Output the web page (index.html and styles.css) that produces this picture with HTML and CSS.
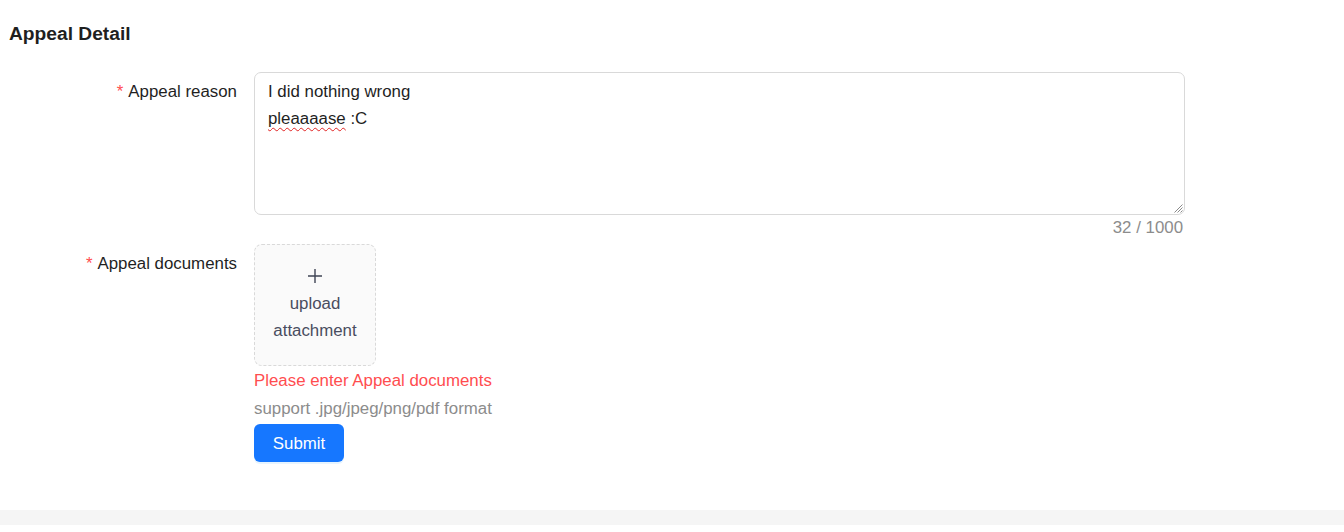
FILE: index.html
```html
<!DOCTYPE html>
<html lang="en">
<head>
<meta charset="utf-8">
<title>Appeal Detail</title>
<link rel="stylesheet" href="styles.css">
</head>
<body>
<div class="page">
  <h2 class="title">Appeal Detail</h2>
  <form class="form">
    <div class="row row-reason">
      <label class="label"><span class="req">*</span>Appeal reason</label>
      <div class="control">
        <div class="textarea" role="textbox" aria-multiline="true">
          <div class="line">I did nothing wrong</div>
          <div class="line"><span class="misspelled">pleaaaase</span> :C</div>
          <svg class="grip" width="10" height="10" viewBox="0 0 10 10"><path d="M9.5 1.5 L1.5 9.5 M9.5 4.5 L4.5 9.5 M9.5 7.5 L7.5 9.5" stroke="#8a8a8a" stroke-width="1"/></svg>
        </div>
        <div class="counter">32 / 1000</div>
      </div>
    </div>
    <div class="row row-docs">
      <label class="label"><span class="req">*</span>Appeal documents</label>
      <div class="control">
        <div class="upload">
          <svg class="plus" width="16" height="16" viewBox="0 0 16 16"><path d="M8 1 V15 M1 8 H15" stroke="#3f4454" stroke-width="1.4"/></svg>
          <div class="upload-text">upload</div>
          <div class="upload-text">attachment</div>
        </div>
        <div class="error">Please enter Appeal documents</div>
        <div class="hint">support .jpg/jpeg/png/pdf format</div>
        <button type="button" class="btn">Submit</button>
      </div>
    </div>
  </form>
  <div class="footer-strip"></div>
</div>
</body>
</html>
```
FILE: styles.css
```css
html, body {
  margin: 0;
  padding: 0;
  background: #ffffff;
}
body {
  font-family: "Liberation Sans", Arial, sans-serif;
  font-size: 16.85px;
  color: #1f1f1f;
}
.page {
  padding-top: 22px;
}
.title {
  margin: 0 0 26px 9px;
  font-size: 19.2px;
  line-height: 24px;
  font-weight: bold;
  color: #1f1f1f;
}
.form {
  display: flex;
  flex-direction: column;
}
.row {
  display: flex;
  align-items: flex-start;
}
.label {
  width: 237px;
  flex: none;
  padding-top: 6px;
  padding-right: 17px;
  text-align: right;
  line-height: 27px;
  color: #1f1f1f;
}
.req {
  color: #ff4d4f;
  margin-right: 5px;
}
.control {
  display: flex;
  flex-direction: column;
  align-items: flex-start;
}
.textarea {
  position: relative;
  box-sizing: border-box;
  width: 931px;
  height: 143px;
  border: 1px solid #d9d9d9;
  border-radius: 7px;
  padding: 5px 12px 4px 13px;
  line-height: 27px;
  color: #1f1f1f;
  background: #fff;
}
.misspelled {
  text-decoration: underline wavy #e02424;
  text-decoration-thickness: 1px;
  text-underline-offset: 3px;
}
.grip {
  position: absolute;
  right: 1px;
  bottom: 1px;
}
.counter {
  align-self: stretch;
  text-align: right;
  padding-top: 1px;
  padding-right: 2px;
  line-height: 24px;
  color: #8c8c8c;
  margin-bottom: 4px;
}
.upload {
  box-sizing: border-box;
  width: 122px;
  height: 122px;
  border: 1px dashed #d9d9d9;
  border-radius: 8px;
  background: #fafafa;
  display: flex;
  flex-direction: column;
  align-items: center;
  justify-content: center;
  color: #494d5f;
}
.plus {
  display: block;
  margin: 1px 0 6px;
}
.upload-text {
  line-height: 27px;
}
.error {
  margin-top: 1px;
  line-height: 28px;
  color: #ff4d4f;
}
.hint {
  line-height: 28px;
  color: #8c8c8c;
  margin-bottom: 1px;
}
.btn {
  box-sizing: border-box;
  width: 90px;
  height: 38px;
  border: none;
  border-radius: 6px;
  background: #1677ff;
  color: #fff;
  font-family: inherit;
  font-size: 16.85px;
  padding: 2px 0 0;
  box-shadow: 0 2px 0 rgba(5, 145, 255, 0.1);
}
.footer-strip {
  margin-top: 48px;
  height: 15px;
  background: #f5f5f5;
}
```
